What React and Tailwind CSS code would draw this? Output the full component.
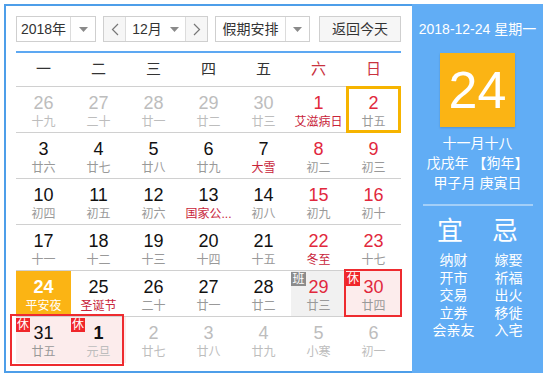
import React from "react";

const rows = [
  [
    { d: 26, l: "十九", o: 1 },
    { d: 27, l: "二十", o: 1 },
    { d: 28, l: "廿一", o: 1 },
    { d: 29, l: "廿二", o: 1 },
    { d: 30, l: "廿三", o: 1 },
    { d: 1, l: "艾滋病日", f: 1 },
    { d: 2, l: "廿五", sel: 1 },
  ],
  [
    { d: 3, l: "廿六" },
    { d: 4, l: "廿七" },
    { d: 5, l: "廿八" },
    { d: 6, l: "廿九" },
    { d: 7, l: "大雪", f: 1 },
    { d: 8, l: "初二" },
    { d: 9, l: "初三" },
  ],
  [
    { d: 10, l: "初四" },
    { d: 11, l: "初五" },
    { d: 12, l: "初六" },
    { d: 13, l: "国家公...", f: 1 },
    { d: 14, l: "初八" },
    { d: 15, l: "初九" },
    { d: 16, l: "初十" },
  ],
  [
    { d: 17, l: "十一" },
    { d: 18, l: "十二" },
    { d: 19, l: "十三" },
    { d: 20, l: "十四" },
    { d: 21, l: "十五" },
    { d: 22, l: "冬至", f: 1 },
    { d: 23, l: "十七" },
  ],
  [
    { d: 24, l: "平安夜", today: 1 },
    { d: 25, l: "圣诞节", f: 1 },
    { d: 26, l: "二十" },
    { d: 27, l: "廿一" },
    { d: 28, l: "廿二" },
    { d: 29, l: "廿三", ban: 1 },
    { d: 30, l: "廿四", xiu: 1 },
  ],
  [
    { d: 31, l: "廿五", xiu: 1 },
    { d: 1, l: "元旦", xiu: 1, o: 1, bold: 1 },
    { d: 2, l: "廿七", o: 1 },
    { d: 3, l: "廿八", o: 1 },
    { d: 4, l: "廿九", o: 1 },
    { d: 5, l: "小寒", o: 1 },
    { d: 6, l: "初一", o: 1 },
  ],
];

const weekdays = ["一", "二", "三", "四", "五", "六", "日"];

function Caret() {
  return (
    <svg width="9" height="5" viewBox="0 0 9 5">
      <path d="M0 0 L9 0 L4.5 5 Z" fill="#8a8a8a" />
    </svg>
  );
}

function Chevron({ dir }) {
  return (
    <svg width="8" height="13" viewBox="0 0 8 13">
      <path
        d={dir === "l" ? "M7 1 L1.5 6.5 L7 12" : "M1 1 L6.5 6.5 L1 12"}
        fill="none"
        stroke="#777"
        strokeWidth="1.2"
      />
    </svg>
  );
}

function Cell({ c, col }) {
  let numCls = "text-[#111]";
  if (c.bold) numCls = "text-[#111] font-bold";
  else if (c.today) numCls = "text-white font-bold";
  else if (c.o) numCls = "text-[#bdbdbd]";
  else if (col >= 5) numCls = "text-[#e1283d]";

  let lunCls = "text-[#999]";
  if (c.today) lunCls = "text-white";
  else if (c.f && !c.o) lunCls = "text-[#c8243a]";
  else if (c.o) lunCls = "text-[#bdbdbd]";

  let bg = "";
  if (c.today) bg = "bg-[#fbb414]";
  else if (c.xiu) bg = "bg-[#fcecec]";
  else if (c.ban) bg = "bg-[#f1f1f1]";

  return (
    <div className={`relative flex flex-col items-center pt-[5px] ${bg}`}>
      {c.sel ? (
        <div className="absolute -top-px left-0 right-0 bottom-[-1px] border-[3px] border-[#f6b400]" />
      ) : null}
      {c.xiu ? (
        <div className="absolute left-0 top-px w-[14px] h-[14px] bg-[#f0262a] text-white text-[12px] leading-[14px] text-center">
          休
        </div>
      ) : null}
      {c.ban ? (
        <div className="absolute left-0 top-px w-[15px] h-[14px] bg-[#8c8c8c] text-white text-[12px] leading-[14px] text-center">
          班
        </div>
      ) : null}
      <div className={`relative text-[18px] leading-[22px] ${numCls}`}>{c.d}</div>
      <div className={`relative text-[12px] leading-[16px] whitespace-nowrap ${lunCls}`}>{c.l}</div>
    </div>
  );
}

export default function App() {
  return (
    <div className="w-[546px] h-[378px] bg-white pl-[4px] pt-[4px] font-['Liberation_Sans','Noto_Sans_CJK_SC',sans-serif]">
      <div className="w-[539px] h-[369px] border-2 border-r-0 border-[#4d9ee9] flex">
        {/* left area */}
        <div className="w-[406px] pl-[10px] pt-[10px]">
          {/* toolbar */}
          <div className="flex items-center h-[26px] text-[14px] text-[#333]">
            <div className="flex w-[80px] h-[26px] border border-[#cfcfcf] bg-white">
              <div className="w-[54px] flex items-center justify-center border-r border-[#dcdcdc]">2018年</div>
              <div className="flex-1 flex items-center justify-center">
                <Caret />
              </div>
            </div>
            <div className="flex w-[105px] h-[26px] ml-[7px] border border-[#cfcfcf] bg-white">
              <div className="w-[22px] flex items-center justify-center border-r border-[#dcdcdc] bg-[#f6f6f6]">
                <Chevron dir="l" />
              </div>
              <div className="flex-1 flex items-center justify-center gap-[8px]">
                <span>12月</span>
                <Caret />
              </div>
              <div className="w-[22px] flex items-center justify-center border-l border-[#dcdcdc] bg-[#f6f6f6]">
                <Chevron dir="r" />
              </div>
            </div>
            <div className="flex w-[95px] h-[26px] ml-[7px] border border-[#cfcfcf] bg-white">
              <div className="w-[70px] flex items-center justify-center border-r border-[#dcdcdc]">假期安排</div>
              <div className="flex-1 flex items-center justify-center">
                <Caret />
              </div>
            </div>
            <div className="w-[82px] h-[26px] ml-[9px] border border-[#cfcfcf] bg-[#f6f6f6] flex items-center justify-center">
              返回今天
            </div>
          </div>

          {/* blue line */}
          <div className="w-[385px] h-[2px] bg-[#5da8f2] mt-[9px]" />

          {/* calendar */}
          <div className="relative w-[385px]">
            <div className="grid grid-cols-7 h-[34px] border-b border-[#d0d0d0] text-[15px]">
              {weekdays.map((w, i) => (
                <div
                  key={w}
                  className={`flex items-center justify-center ${i >= 5 ? "text-[#c9323e]" : "text-[#333]"}`}
                >
                  {w}
                </div>
              ))}
            </div>
            <div className="relative">
              {rows.map((r, ri) => (
                <div
                  key={ri}
                  className={`grid grid-cols-7 h-[46px] ${ri < 5 ? "border-b border-[#d0d0d0]" : ""}`}
                >
                  {r.map((c, ci) => (
                    <Cell key={ci} c={c} col={ci} />
                  ))}
                </div>
              ))}
              <div className="absolute left-[328px] top-[182px] w-[58px] h-[48px] border-2 border-[#ee2b2f]" />
              <div className="absolute left-[-6px] top-[227px] w-[114px] h-[52px] border-2 border-[#ee2b2f]" />
            </div>
          </div>
        </div>

        {/* right panel */}
        <div className="w-[131px] -mt-[2px] -mb-[2px] bg-[#61adf5] flex flex-col items-center text-white">
          <div className="mt-[15px] text-[14px] leading-[20px] whitespace-nowrap">2018-12-24 星期一</div>
          <div className="mt-[14px] w-[75px] h-[74px] bg-[#fbb414] flex items-center justify-center text-[52px] leading-none shadow-[0_1px_2px_rgba(0,0,0,0.15)]">
            24
          </div>
          <div className="mt-[6px] text-[14px] leading-[20px]">十一月十八</div>
          <div className="text-[14px] leading-[20px] whitespace-nowrap">戊戌年 【狗年】</div>
          <div className="text-[14px] leading-[20px] whitespace-nowrap">甲子月 庚寅日</div>
          <div className="mt-[11px] w-[110px] h-[2px] bg-[#a3cff8]" />
          <div className="mt-[10px] flex w-[110px] justify-around text-[26px] leading-[30px]">
            <span>宜</span>
            <span>忌</span>
          </div>
          <div className="mt-[6px] flex w-[110px] justify-around text-[14px] leading-[17.5px]">
            <div className="flex flex-col items-center">
              <span>纳财</span>
              <span>开市</span>
              <span>交易</span>
              <span>立券</span>
              <span>会亲友</span>
            </div>
            <div className="flex flex-col items-center">
              <span>嫁娶</span>
              <span>祈福</span>
              <span>出火</span>
              <span>移徙</span>
              <span>入宅</span>
            </div>
          </div>
        </div>
      </div>
    </div>
  );
}
